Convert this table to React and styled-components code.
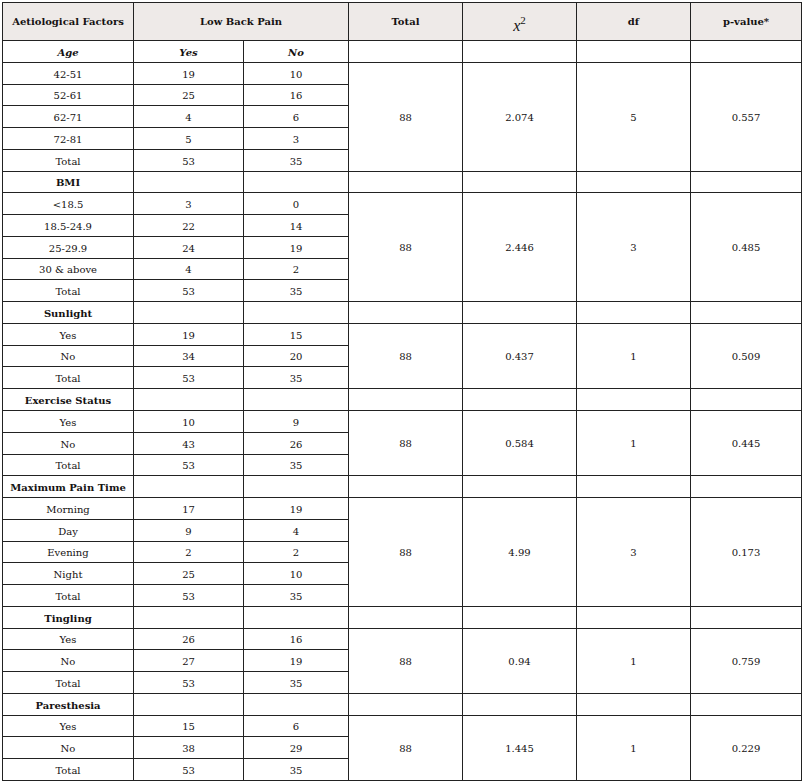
import React from "react";
import styled, { createGlobalStyle } from "styled-components";

const GlobalStyle = createGlobalStyle`
  body {
    margin: 0;
    background: #ffffff;
  }
`;

const groups = [
  {
    label: "Age",
    italic: true,
    head: ["Yes", "No"],
    rows: [
      ["42-51", "19", "10"],
      ["52-61", "25", "16"],
      ["62-71", "4", "6"],
      ["72-81", "5", "3"],
      ["Total", "53", "35"],
    ],
    stats: ["88", "2.074", "5", "0.557"],
  },
  {
    label: "BMI",
    rows: [
      ["<18.5", "3", "0"],
      ["18.5-24.9", "22", "14"],
      ["25-29.9", "24", "19"],
      ["30 & above", "4", "2"],
      ["Total", "53", "35"],
    ],
    stats: ["88", "2.446", "3", "0.485"],
  },
  {
    label: "Sunlight",
    rows: [
      ["Yes", "19", "15"],
      ["No", "34", "20"],
      ["Total", "53", "35"],
    ],
    stats: ["88", "0.437", "1", "0.509"],
  },
  {
    label: "Exercise Status",
    rows: [
      ["Yes", "10", "9"],
      ["No", "43", "26"],
      ["Total", "53", "35"],
    ],
    stats: ["88", "0.584", "1", "0.445"],
  },
  {
    label: "Maximum Pain Time",
    rows: [
      ["Morning", "17", "19"],
      ["Day", "9", "4"],
      ["Evening", "2", "2"],
      ["Night", "25", "10"],
      ["Total", "53", "35"],
    ],
    stats: ["88", "4.99", "3", "0.173"],
  },
  {
    label: "Tingling",
    rows: [
      ["Yes", "26", "16"],
      ["No", "27", "19"],
      ["Total", "53", "35"],
    ],
    stats: ["88", "0.94", "1", "0.759"],
  },
  {
    label: "Paresthesia",
    rows: [
      ["Yes", "15", "6"],
      ["No", "38", "29"],
      ["Total", "53", "35"],
    ],
    stats: ["88", "1.445", "1", "0.229"],
  },
];

const widths = [131, 110, 105, 114, 114, 114, 111];

// body rows share 740px, rounded so the lines land on whole pixels
const ROW = 740 / 34;
const rowHeight = (k) => Math.round((k + 1) * ROW) - Math.round(k * ROW);

const Wrap = styled.div`
  padding: 2px 0 0 2px;
`;

const Table = styled.table`
  border-collapse: collapse;
  table-layout: fixed;
  width: 800px;
  font-family: "DejaVu Serif", "Liberation Serif", serif;
  font-size: 10px;
  color: #151212;
`;

const HeadCell = styled.th`
  background: #eeeae8;
  border: 1px solid #222;
  height: 37px;
  padding: 0;
  font-weight: bold;
  text-align: center;
  vertical-align: middle;
`;

const Chi = styled.span`
  font-family: "Liberation Serif", serif;
  font-style: italic;
  font-weight: normal;
  font-size: 16px;
  position: relative;
  top: 3px;

  sup {
    font-style: normal;
    font-size: 11px;
    vertical-align: 7px;
  }
`;

const Row = styled.tr`
  height: ${(p) => p.$h}px;
`;

const Cell = styled.td`
  border: 1px solid #222;
  padding: 2px 0 0;
  line-height: 12px;
  text-align: center;
  vertical-align: middle;
  font-weight: ${(p) => (p.$bold ? "bold" : "normal")};
  font-style: ${(p) => (p.$italic ? "italic" : "normal")};
`;

function Group({ g, start }) {
  const head = g.head || ["", ""];
  return (
    <>
      <Row $h={rowHeight(start)}>
        <Cell $bold $italic={g.italic}>{g.label}</Cell>
        <Cell $bold $italic={g.italic}>{head[0]}</Cell>
        <Cell $bold $italic={g.italic}>{head[1]}</Cell>
        <Cell />
        <Cell />
        <Cell />
        <Cell />
      </Row>
      {g.rows.map((r, i) => (
        <Row key={i} $h={rowHeight(start + 1 + i)}>
          <Cell>{r[0]}</Cell>
          <Cell>{r[1]}</Cell>
          <Cell>{r[2]}</Cell>
          {i === 0 &&
            g.stats.map((s, j) => (
              <Cell key={j} rowSpan={g.rows.length}>
                {s}
              </Cell>
            ))}
        </Row>
      ))}
    </>
  );
}

export default function App() {
  let start = 0;
  const starts = groups.map((g) => {
    const s = start;
    start += g.rows.length + 1;
    return s;
  });

  return (
    <Wrap>
      <GlobalStyle />
      <Table>
        <colgroup>
          {widths.map((w, i) => (
            <col key={i} style={{ width: w }} />
          ))}
        </colgroup>
        <thead>
          <tr>
            <HeadCell>Aetiological Factors</HeadCell>
            <HeadCell colSpan={2}>Low Back Pain</HeadCell>
            <HeadCell>Total</HeadCell>
            <HeadCell>
              <Chi>
                x<sup>2</sup>
              </Chi>
            </HeadCell>
            <HeadCell>df</HeadCell>
            <HeadCell>p-value*</HeadCell>
          </tr>
        </thead>
        <tbody>
          {groups.map((g, i) => (
            <Group key={g.label} g={g} start={starts[i]} />
          ))}
        </tbody>
      </Table>
    </Wrap>
  );
}
